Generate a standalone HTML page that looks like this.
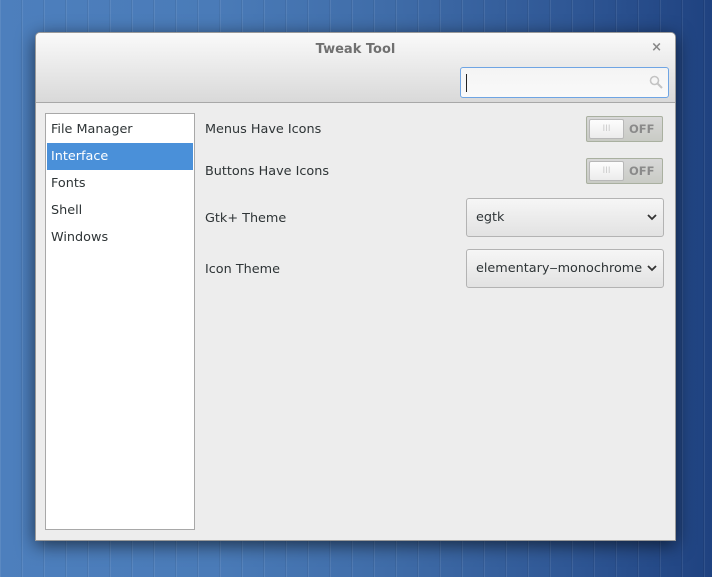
<!DOCTYPE html>
<html><head><meta charset="utf-8"><style>
*{margin:0;padding:0;box-sizing:border-box}
body{width:712px;height:577px;overflow:hidden;position:relative;font-family:"DejaVu Sans","Liberation Sans",sans-serif;font-size:12.8px;color:#2e3436;
background:linear-gradient(90deg,#4d7fbd 0%,#4a7bb8 30%,#3f6ca8 55%,#2f5795 80%,#1f4280 100%);}
.stripes{position:absolute;inset:0;background:repeating-linear-gradient(90deg,rgba(255,255,255,.08) 0 1px,rgba(0,0,0,0) 1px 21px,rgba(0,0,0,.06) 21px 22px);}
.win{position:absolute;left:35px;top:32px;width:641px;height:509px;background:#ededed;border:1px solid #9a9a9a;border-radius:5px 5px 0 0;box-shadow:0 4px 18px rgba(0,0,0,.6);overflow:hidden}
.tb{position:absolute;left:0;top:0;right:0;height:70px;background:linear-gradient(#fafafa,#d9d9d9);border-bottom:1px solid #a8a8a8}
.title{position:absolute;top:9px;left:0;right:0;text-align:center;font-weight:bold;color:#707070;font-size:13px}
.x{position:absolute;right:13px;top:7px;color:#888;font-size:13px;font-weight:bold}
.search{position:absolute;left:424px;top:34px;width:209px;height:31px;border:1px solid #6fa5e4;border-radius:3px;background:linear-gradient(#f4f4f4,#fafafa)}
.cursor{position:absolute;left:5px;top:6px;width:1px;height:18px;background:#222}
.side{position:absolute;left:9px;top:80px;width:150px;height:417px;background:#fff;border:1px solid #a8a8a8;padding-top:2px}
.side div{height:27px;line-height:27px;padding-left:5px}
.side .sel{background:#4a90d9;color:#fff;margin:0 1px;padding-left:4px}
.lbl{position:absolute;left:169px}
.sw{position:absolute;left:550px;width:77px;height:26px;border:1px solid #a9b0a0;border-radius:2px;background:linear-gradient(#d8d8d8,#c9cbc5)}
.sw .k{position:absolute;left:2px;top:2px;width:35px;height:20px;background:linear-gradient(#fdfdfd,#ececec);border:1px solid #b8b8b8;border-radius:2px;color:#ccc;font-size:9px;text-align:center;line-height:18px}
.sw .o{position:absolute;left:42px;top:5px;font-weight:bold;color:#8a8a8a;font-size:11.5px}
.cb{position:absolute;left:430px;width:198px;height:39px;border:1px solid #b3b3b3;border-radius:3px;background:linear-gradient(#f6f6f6,#e2e2e2);line-height:37px;padding-left:9px}
.cb svg{position:absolute;right:6px;top:15px}
</style></head><body><div class="stripes"></div>
<div class="win">
<div class="tb"><div class="title">Tweak Tool</div><div class="x">×</div>
<div class="search"><div class="cursor"></div>
<svg style="position:absolute;right:5px;top:7px" width="14" height="15" viewBox="0 0 14 15"><circle cx="5.5" cy="5.5" r="4" fill="none" stroke="#c4c4c4" stroke-width="1.6"/><path d="M8.5 8.5L13 13" stroke="#c4c4c4" stroke-width="2"/></svg></div></div>
<div class="side"><div>File Manager</div><div class="sel">Interface</div><div>Fonts</div><div>Shell</div><div>Windows</div></div>
<div class="lbl" style="top:89px">Menus Have Icons</div>
<div class="lbl" style="top:131px">Buttons Have Icons</div>
<div class="lbl" style="top:178px">Gtk+ Theme</div>
<div class="lbl" style="top:229px">Icon Theme</div>
<div class="sw" style="top:83px"><div class="k">III</div><div class="o">OFF</div></div>
<div class="sw" style="top:125px"><div class="k">III</div><div class="o">OFF</div></div>
<div class="cb" style="top:165px">egtk<svg width="10" height="7"><path d="M1 1L5 5L9 1" fill="none" stroke="#333" stroke-width="1.8"/></svg></div>
<div class="cb" style="top:216px">elementary‒monochrome<svg width="10" height="7"><path d="M1 1L5 5L9 1" fill="none" stroke="#333" stroke-width="1.8"/></svg></div>
</div>
</body></html>
